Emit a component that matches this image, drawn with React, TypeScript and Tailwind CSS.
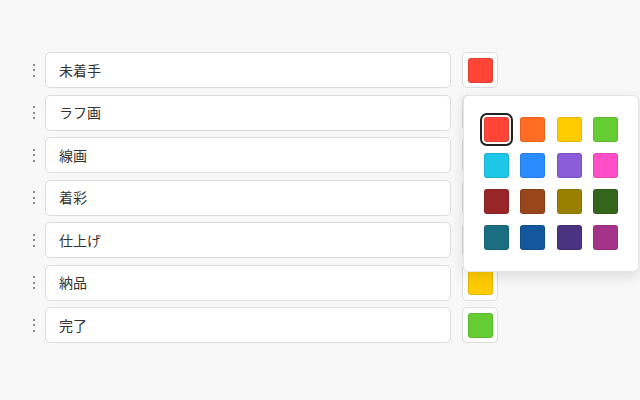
const stages = [
  { label: '未着手', color: '#ff4438' },
  { label: 'ラフ画', color: '#ff6d24' },
  { label: '線画', color: '#ffcc00' },
  { label: '着彩', color: '#66cc33' },
  { label: '仕上げ', color: '#1ec8e8' },
  { label: '納品', color: '#ffcc00' },
  { label: '完了', color: '#66cc33' },
];

const palette = [
  '#ff4438', '#ff6d24', '#ffcc00', '#66cc33',
  '#1ec6e8', '#2a8cff', '#8a5cd8', '#ff4fc8',
  '#992626', '#99461a', '#998000', '#33661a',
  '#1a6e80', '#14579c', '#4a3380', '#a6338a',
];

const DragHandle = () => (
  <div className="flex w-[12px] flex-col items-center gap-[3.5px]">
    <span className="h-[2px] w-[2.5px] bg-[#8a8a8a]" />
    <span className="h-[2px] w-[2.5px] bg-[#8a8a8a]" />
    <span className="h-[2px] w-[2.5px] bg-[#8a8a8a]" />
  </div>
);

const ColorPopover = () => (
  <div className="absolute left-[1px] top-full z-10 mt-[7px] w-[176px] rounded-md border border-[#e4e4e4] bg-white px-[20px] py-[21px] shadow-[0_4px_14px_rgba(0,0,0,0.12)]">
    <div className="grid grid-cols-4 gap-[11px]">
      {palette.map((c, i) => (
        <button
          key={c + i}
          className={`h-[25px] w-[25px] rounded-[3px] border border-black/10 ${
            i === 0 ? 'ring-2 ring-[#222] ring-offset-2 ring-offset-white' : ''
          }`}
          style={{ backgroundColor: c }}
        />
      ))}
    </div>
  </div>
);

export default function App() {
  return (
    <div
      className="h-[400px] w-[640px] bg-[#f8f8f8] pl-[28px] pt-[52px]"
      style={{ fontFamily: '"Noto Sans CJK JP", "Noto Sans", sans-serif' }}
    >
      <div className="flex flex-col gap-[6.5px]">
        {stages.map((s, i) => (
          <div key={s.label} className="flex items-center">
            <DragHandle />
            <div className="ml-[5px] flex h-9 w-[406px] items-center rounded-[5px] border border-[#dcdcdc] bg-white px-[13px] text-[14px] text-[#333]">
              {s.label}
            </div>
            <div className="relative ml-[11px]">
              <button className="flex h-9 w-9 items-center justify-center rounded-[5px] border border-[#dcdcdc] bg-white">
                <span
                  className="h-[25px] w-[25px] rounded-[3px] border border-black/10"
                  style={{ backgroundColor: s.color }}
                />
              </button>
              {i === 0 ? <ColorPopover /> : null}
            </div>
          </div>
        ))}
      </div>
    </div>
  );
}
